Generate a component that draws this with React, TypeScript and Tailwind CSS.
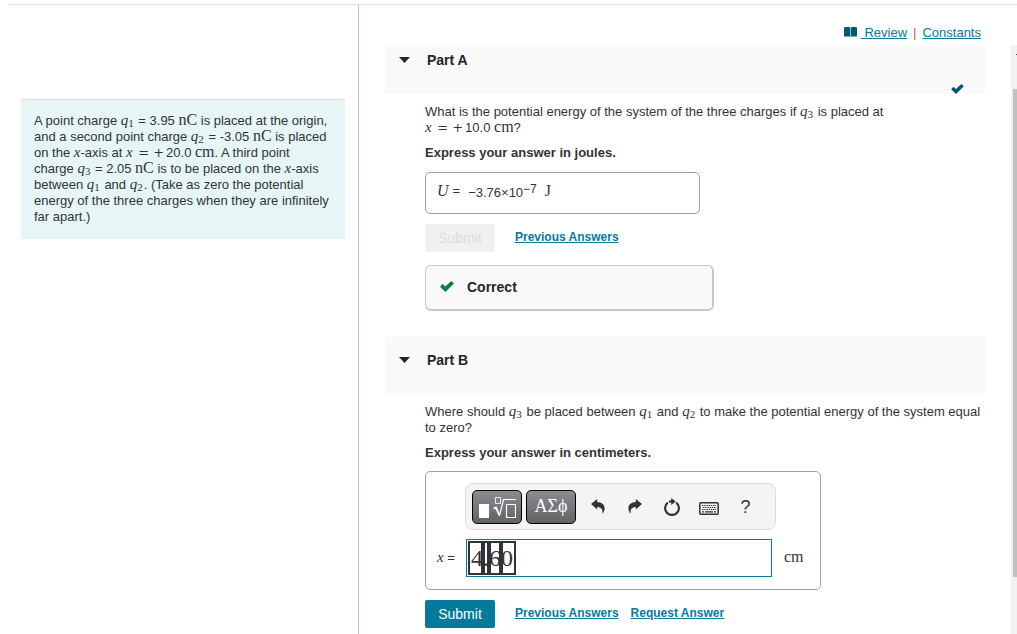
import { useState, type ReactNode } from 'react';

const LINK = 'text-[#047a9c] underline hover:text-[#005a70]';

function Var({ name, sub }: { name: string; sub?: string }) {
  return (
    <span className="font-['Liberation_Serif',serif] text-[15px] leading-0">
      <i>{name}</i>
      {sub && <span className="relative top-0.5 mr-px text-[11px] leading-0">{sub}</span>}
    </span>
  );
}

function Unit({ children }: { children: ReactNode }) {
  return <span className="font-['Liberation_Serif',serif] text-base leading-0">{children}</span>;
}

function Op({ children }: { children: ReactNode }) {
  return (
    <span className="mx-0.5 font-['DejaVu_Serif',serif] text-[13px] leading-0">{children}</span>
  );
}

function Check({ className }: { className: string }) {
  return (
    <svg viewBox="0 0 14 11" className={className} fill="currentColor" aria-hidden="true">
      <path d="M0 5.8 2.6 3.1 5.3 5.5 11.3 0 14 2.4 5.4 11Z" />
    </svg>
  );
}

function PartHeader({
  title,
  open,
  done,
  onToggle,
}: {
  title: string;
  open: boolean;
  done?: boolean;
  onToggle: () => void;
}) {
  return (
    <header className={`bg-[#f9f9f9] px-3.5 ${done ? 'pt-[7px]' : 'pt-[15px] pb-6'}`}>
      <button
        type="button"
        aria-expanded={open}
        onClick={onToggle}
        className="flex items-center gap-[17px] text-sm leading-[17px] font-bold text-[#252525]"
      >
        <svg viewBox="0 0 11 6" className="mb-0.5 h-1.5 w-[11px]" fill="currentColor" aria-hidden="true">
          <path d="M0 0H11L5.5 6Z" />
        </svg>
        {title}
      </button>
      {done && (
        <div className="flex h-[25px] items-end justify-end px-[7px]">
          <Check className="h-2.5 w-[13px] text-[#005a70]" />
        </div>
      )}
    </header>
  );
}

const TEMPLATE =
  'flex h-[34px] w-[50px] items-center justify-center rounded-[5px] border border-black bg-linear-to-b from-[#8b8b92] to-[#626265] text-white';
const TOOL = 'flex h-8 w-[37px] items-center justify-center';

function Toolbar() {
  return (
    <div className="flex h-[47px] w-[311px] items-center rounded-lg border border-[#dddddd] bg-[#f4f4f4] pl-1.5 text-[#333333]">
      <button type="button" aria-label="Templates" className={TEMPLATE}>
        <svg viewBox="0 0 38 24" className="h-6 w-[38px]" fill="none" stroke="#fff" aria-hidden="true">
          <path d="M1 9H11V23H1Z" fill="#fff" stroke="none" />
          <path d="M17.500 2.500H22.500V8.500H17.500Z" strokeWidth="1" opacity=".85" />
          <path d="M15.500 13.500 18 12.500 21.500 20.500" strokeWidth="1.8" />
          <path d="M21.500 20.500 25.500 4.500H38" strokeWidth="1.2" />
          <path d="M28.500 9.500H37.500V22.500H28.500Z" strokeWidth="1.2" />
        </svg>
      </button>
      <button
        type="button"
        aria-label="Symbols"
        className={`${TEMPLATE} ml-1 pb-0.5 font-['Liberation_Serif',serif] text-lg`}
      >
        ΑΣϕ
      </button>
      <div className="ml-[3px] flex items-center">
        <button type="button" aria-label="Undo" className={TOOL}>
          <svg viewBox="0 0 14 15" className="h-[15px] w-3.5" fill="currentColor" aria-hidden="true">
            <path d="M0 5 6.200 0V3C11 3.200 13.600 5.800 13.600 9.500 13.600 11.800 12.600 13.600 11.200 14.600 12 11.200 10.800 8.200 6.200 8V10.500Z" />
          </svg>
        </button>
        <button type="button" aria-label="Redo" className={TOOL}>
          <svg viewBox="0 0 14 15" className="h-[15px] w-3.5" fill="currentColor" aria-hidden="true">
            <path d="M14 5 7.800 0V3C3 3.200 0.400 5.800 0.400 9.500 0.400 11.800 1.400 13.600 2.800 14.600 2 11.200 3.200 8.200 7.800 8V10.500Z" />
          </svg>
        </button>
        <button type="button" aria-label="Reset" className={TOOL}>
          <svg viewBox="0 0 16 18" className="h-[18px] w-4" fill="none" aria-hidden="true">
            <path d="M12.200 4.600A6.900 6.900 0 1 1 3.800 4.600M5 3.800A6.900 6.900 0 0 1 8 3.300" stroke="currentColor" strokeWidth="2.2" />
            <path d="M7.200 0 11.800 3.500 7.200 7Z" fill="currentColor" />
          </svg>
        </button>
        <button type="button" aria-label="Keyboard shortcuts" className={TOOL}>
          <svg viewBox="0 0 20 13" className="mt-1 h-[13px] w-5" fill="none" stroke="currentColor" aria-hidden="true">
            <rect x=".8" y=".8" width="18.4" height="11.4" rx="1" strokeWidth="1.5" />
            <path d="M3 3.500H17M4 5.500H17M3 7.500H17" strokeWidth="1" strokeDasharray="1.400 .8" />
            <path d="M3 9.800H17" strokeWidth="1.200" strokeDasharray="2 1 8 1 2" />
          </svg>
        </button>
        <button type="button" aria-label="Help" className={`${TOOL} text-lg leading-none`}>
          ?
        </button>
      </div>
    </div>
  );
}

export default function App() {
  const [openA, setOpenA] = useState(true);
  const [openB, setOpenB] = useState(true);
  const [answer, setAnswer] = useState('4.60');

  return (
    <div className="min-h-screen bg-white pt-1 font-['Liberation_Sans',Arial,sans-serif] text-[13px] leading-4 text-[#333333]">
      <div className="ml-2 h-px bg-[#dddddd]" />
      <div className="flex min-h-[calc(100vh-5px)]">
        <aside className="w-[359px] shrink-0 border-r border-[#b3c6d3] pt-[94px] pr-[13px] pl-[21px]">
          <p className="border-t border-[#d5dfdd] bg-[#e6f6f7] pt-[13px] pr-3 pb-3.5 pl-[13px]">
            A point charge <Var name="q" sub="1" /> = 3.95 <Unit>nC</Unit> is placed at the origin,
            and a second point charge <Var name="q" sub="2" /> = -3.05 <Unit>nC</Unit> is placed on
            the <Var name="x" />-axis at <Var name="x" /> <Op>=</Op><Op>+</Op>20.0 <Unit>cm</Unit>. A
            third point charge <Var name="q" sub="3" /> = 2.05 <Unit>nC</Unit> is to be placed on the{' '}
            <Var name="x" />-axis between <Var name="q" sub="1" /> and <Var name="q" sub="2" />. (Take
            as zero the potential energy of the three charges when they are infinitely far apart.)
          </p>
        </aside>

        <main className="min-w-0 flex-1 pt-5 pr-[26px] pl-[26px]">
          <nav className="mr-1 flex h-5 items-start justify-end gap-1">
            <svg viewBox="0 0 13 10" className="mt-0.5 h-2.5 w-[13px]" fill="#005a70" aria-hidden="true">
              <path d="M0 .4C2 0 4.500 0 6.200 .5V9.800C4.500 9.300 2 9.300 0 9.600ZM6.800 .5C8.500 0 11 0 13 .4V9.600C11 9.300 8.500 9.300 6.800 9.800Z" />
            </svg>
            <a href="#review" className={`whitespace-pre ${LINK}`}>{' Review'}</a>
            <span className="px-0.5 text-[#a06a3a]">|</span>
            <a href="#constants" className={LINK}>Constants</a>
          </nav>

          <section>
            <PartHeader title="Part A" open={openA} done onToggle={() => setOpenA(!openA)} />
            {openA && (
              <div className="pt-2.5 pb-[26px] pl-10">
                <p className="max-w-[466px]">
                  What is the potential energy of the system of the three charges if{' '}
                  <Var name="q" sub="3" /> is placed at <Var name="x" /> <Op>=</Op><Op>+</Op>10.0{' '}
                  <Unit>cm</Unit>?
                </p>
                <p className="mt-[9px] font-bold">Express your answer in joules.</p>
                <div className="mt-[11px] flex h-[42px] w-[275px] items-center rounded-[5px] border border-[#a0a0a0] px-[11px] pb-1">
                  <i className="font-['Liberation_Serif',serif] text-base">U</i>
                  <span className="ml-1">=</span>
                  <span className="mt-1 ml-2">
                    −3.76×10<sup className="-top-1 text-xs">−7</sup>
                  </span>
                  <span className="ml-2 font-['Liberation_Serif',serif] text-base">J</span>
                </div>
                <div className="mt-2.5 flex items-center gap-5">
                  <button type="button" disabled className="h-7 w-[70px] rounded-xs bg-[#f0f0f0] text-sm text-[#dcdcdc]">
                    Submit
                  </button>
                  <a href="#answers-a" className={`pb-0.5 text-xs font-bold ${LINK}`}>Previous Answers</a>
                </div>
                <div className="mt-[13px] flex h-[46px] w-[289px] items-center gap-[13px] rounded-md border border-r-2 border-b-2 border-[#c7c7c7] bg-[#f9f9f9] pb-0.5 pl-3.5 text-sm font-bold text-[#252525]">
                  <Check className="h-[11px] w-3.5 text-[#038238]" />
                  Correct
                </div>
              </div>
            )}
          </section>

          <section>
            <PartHeader title="Part B" open={openB} onToggle={() => setOpenB(!openB)} />
            {openB && (
              <div className="pt-[11px] pl-10">
                <p>
                  Where should <Var name="q" sub="3" /> be placed between <Var name="q" sub="1" /> and{' '}
                  <Var name="q" sub="2" /> to make the potential energy of the system equal to zero?
                </p>
                <p className="mt-[9px] font-bold">Express your answer in centimeters.</p>
                <div className="mt-2.5 w-[396px] rounded-[5px] border border-[#a0a0a0] pt-[11px] pb-3">
                  <div className="pl-[39px]">
                    <Toolbar />
                  </div>
                  <div className="mt-[9px] flex items-center pl-[11px]">
                    <label htmlFor="answer" className="w-[29px]">
                      <Var name="x" /> =
                    </label>
                    <div className="relative">
                      <input
                        id="answer"
                        value={answer}
                        onChange={(e) => setAnswer(e.target.value)}
                        className="block h-[38px] w-[306px] border border-[#047a9c] pl-1 font-['Liberation_Serif',serif] text-2xl leading-none outline-none"
                      />
                      <div className="pointer-events-none absolute top-0.5 left-0.5 flex h-[34px] border-2 border-[#333333]" aria-hidden="true">
                        <span className="w-[13px] border-r-2 border-[#333333]" />
                        <span className="w-1.5 border-x-2 border-[#333333]" />
                        <span className="w-3 border-x-2 border-[#333333]" />
                        <span className="w-[13px] border-l-2 border-[#333333]" />
                      </div>
                    </div>
                    <span className="ml-3"><Unit>cm</Unit></span>
                  </div>
                </div>
                <div className="mt-2.5 flex items-center gap-5">
                  <button type="button" className="h-7 w-[70px] rounded-xs bg-[#047a9c] text-sm text-white">
                    Submit
                  </button>
                  <div className="flex gap-3 pb-0.5 text-xs font-bold">
                    <a href="#answers-b" className={LINK}>Previous Answers</a>
                    <a href="#request" className={LINK}>Request Answer</a>
                  </div>
                </div>
              </div>
            )}
          </section>
        </main>

        <div className="mt-10 flex w-1.5 shrink-0 flex-col items-end bg-[#f1f1f1] pt-[9px]" aria-hidden="true">
          <span className="h-px w-px bg-[#505050]" />
          <span className="mt-[34px] mb-[57px] w-1 flex-1 bg-[#c1c1c1]" />
        </div>
      </div>
    </div>
  );
}
